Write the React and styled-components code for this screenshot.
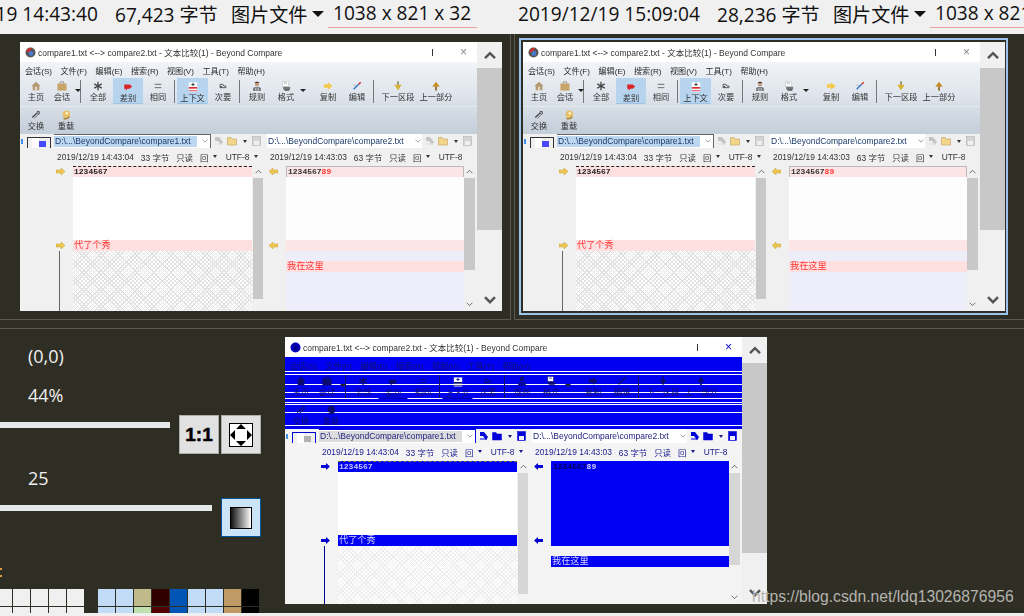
import React from "react"
import styled, { createGlobalStyle, ThemeProvider, useTheme } from "styled-components"

const FONT = '"Liberation Sans", "Noto Sans CJK SC", sans-serif'
const UI_FONT = '"Open Sans", "Noto Sans CJK SC", sans-serif'

const stripes = (blue, lines) => {
    const stops = []
    let y = 0
    lines.forEach((l) => {
        stops.push(`${blue} ${y}px ${l}px`, `#fff ${l}px ${l + 1.5}px`)
        y = l + 1.5
    })
    stops.push(`${blue} ${y}px 100%`)
    return `linear-gradient(to bottom, ${stops.join(",")})`
}

const normal = {
    mono: null,
    pathMono: null,
    toolbar: "linear-gradient(to bottom, #f1f4f8 0%, #dfe5ec 45%, #c4ced9 100%)",
    rowLine: "#e6eaef",
    text: "#2a2a2a",
    toolText: "#333333",
    activeBg: "#b7d4ee",
    activeBorder: "#9fc4e6",
    sep: "#777777",
    titleText: "#333333",
    closeColor: "#888888",
    pathBg: "#f0f0f0",
    comboSel: "#bdd7f0",
    comboEdge: "#666666",
    comboText: "#1a3a6a",
    infoText: "#333333",
    pink: "#ffe0e0",
    pinkR: "#fde5e5",
    plain: "#ffffff",
    faint: "#fdfdfd",
    lav: "#eeeefa",
    lineText: "#222222",
    lineTextR: "#333333",
    diffText: "#ff3333",
    hatch: "#e2e2e2",
    gutter: "#f0f0f0",
    thumb: "#c8c8c8",
    arrow: "#f0c850",
    vline: "#666666",
    pinkBorder: "#bbbbbb",
    dash: "#222222",
    mini: "#4848ff",
    miniLine: "#333333",
}

const blue = {
    ...normal,
    mono: "#0c0c70",
    pathMono: "#0000d8",
    toolbar: stripes("#0000f0", [14, 17, 27, 35, 41, 45, 47, 55, 68]),
    rowLine: "transparent",
    text: "#10106c",
    toolText: "#10106c",
    activeBg: "transparent",
    activeBorder: "#0000a8",
    sep: "#101070",
    closeColor: "#0000d0",
    pathBg: "#f4f4f4",
    comboSel: "#dcdcdc",
    comboEdge: "#0000e0",
    comboText: "#202080",
    infoText: "#18188c",
    pink: "#0000f5",
    pinkR: "#0000f5",
    faint: "#0000f5",
    lav: "#f3f3f3",
    lineText: "#c8c8ff",
    lineTextR: "#00005c",
    diffText: "#d8d8ff",
    hatch: "#eeeeee",
    gutter: "#f3f3f3",
    thumb: "#d6d6d6",
    arrow: "#0000d0",
    vline: "#000090",
    pinkBorder: "#0000f5",
    dash: "#777744",
    mini: "#b0b0b0",
    miniLine: "#0000d0",
}

const GlobalStyle = createGlobalStyle`
    html, body {
        margin: 0;
        padding: 0;
        background: #2f2e24;
        overflow: hidden;
    }
`

const Page = styled.div`
    position: relative;
    width: 1024px;
    height: 616px;
    overflow: hidden;
    background: #2f2e24;
    display: flex;
    flex-direction: column;
`

const Header = styled.div`
    display: flex;
    height: 34px;
    flex-shrink: 0;
    background: #f0f0f0;
    font-family: ${UI_FONT};
    font-size: 19.1px;
    color: #111111;
    white-space: nowrap;
`

const HeaderCell = styled.div`
    width: ${(props) => (props.$right ? "510px" : "514px")};
    height: 28px;
    display: flex;
    align-items: center;
    justify-content: ${(props) => (props.$right ? "flex-start" : "flex-end")};
    padding: ${(props) => (props.$right ? "0 0 0 4px" : "0 37px 0 0")};
    box-sizing: border-box;
    overflow: hidden;
`

const HeaderDate = styled.span`
    flex-shrink: 0;
    width: 182px;
    margin-right: 17px;
`

const HeaderSize = styled.span`
    flex-shrink: 0;
    width: 100px;
    margin-right: 16px;
`

const HeaderType = styled.span`
    flex-shrink: 0;
    width: 72px;
    margin-right: 9px;
`

const HeaderCaret = styled.span`
    flex-shrink: 0;
    width: 0;
    height: 0;
    margin-right: 4px;
    border-left: 6px solid transparent;
    border-right: 6px solid transparent;
    border-top: 6px solid #111111;
`

const Dims = styled.span`
    flex-shrink: 0;
    box-sizing: border-box;
    width: 149px;
    height: 28px;
    line-height: 27px;
    padding-left: 5px;
    border-bottom: 1px solid #e8a0a0;
`

const ThumbRow = styled.div`
    display: flex;
    height: 286px;
    flex-shrink: 0;
`

const ThumbCell = styled.div`
    box-sizing: border-box;
    height: 286px;
    border-bottom: 1px solid #5a5a52;
    ${(props) =>
        props.$right
            ? `
        width: 510px;
        margin-left: 3px;
        border-left: 1px solid #5a5a52;
        padding: 4px 0 0 4px;
    `
            : `
        width: 511px;
        border-right: 1px solid #5a5a52;
        padding: 8px 0 0 20px;
    `}
`

const SelectedFrame = styled.div`
    box-sizing: border-box;
    width: 489px;
    height: 277px;
    border: 2px solid #9cc4ec;
    padding: 2px 1px 2px 2px;
`

const Rule = styled.div`
    height: 1px;
    margin-top: 8px;
    flex-shrink: 0;
    background: #5a5a52;
`

const BottomRow = styled.div`
    display: flex;
    height: 284px;
    flex-shrink: 0;
`

const BottomStrip = styled.div`
    height: 3px;
    background: #f0f0f0;
`

const ViewPanel = styled.div`
    width: 285px;
    flex-shrink: 0;
    padding-top: 15px;
    box-sizing: border-box;
    display: flex;
    flex-direction: column;
    overflow: hidden;
    font-family: ${UI_FONT};
    font-size: 18px;
    color: #f0f0f0;
`

const Readout = styled.div`
    height: 24px;
    line-height: 24px;
    padding-left: 28px;
    margin-bottom: ${(props) => props.$after}px;
`

const ControlRow = styled.div`
    display: flex;
    align-items: flex-start;
    margin-bottom: ${(props) => props.$after}px;
`

const Slider = styled.div`
    width: ${(props) => props.$w}px;
    height: 6px;
    margin: 7px 9px 0 0;
    background: #e6e9ea;
`

const ViewButton = styled.div`
    box-sizing: border-box;
    width: 40px;
    height: 39px;
    margin-right: 2px;
    display: flex;
    align-items: center;
    justify-content: center;
    background: ${(props) => (props.$active ? "#cce4f7" : "#e1e1e1")};
    border: 1px solid ${(props) => (props.$active ? "#005499" : "#adadad")};
    font-family: "Liberation Sans", sans-serif;
    font-weight: 700;
    font-size: 19px;
    -webkit-text-stroke: 0.5px #000000;
    color: #000000;
`

const FitIcon = styled.div`
    box-sizing: border-box;
    width: 24px;
    height: 24px;
    border: 1px solid #000000;
    background: #ffffff;
`

const GradientIcon = styled.div`
    box-sizing: border-box;
    width: 22px;
    height: 22px;
    border: 1px solid #000000;
    background: linear-gradient(to right, #111111, #ffffff);
`

const OrangeMark = styled.div`
    width: 2px;
    height: 9px;
    margin-top: 31px;
    border-top: 2px solid #e0a040;
    border-bottom: 2px solid #e0a040;
    box-sizing: border-box;
`

const Palette = styled.div`
    display: flex;
    margin: 12px 0 0 -5px;
    height: 24px;
    overflow: hidden;
    gap: 14px;
`

const SwatchGrid = styled.div`
    display: grid;
    grid-template-columns: repeat(${(props) => props.$cols}, 17px);
    grid-auto-rows: 17px;
    gap: 1px;
`

const Swatch = styled.div`
    background: ${(props) => props.$c};
`

const BlueSlot = styled.div`
    padding-top: 8px;
`

const Shell = styled.div`
    display: flex;
    width: 482px;
    height: ${(props) => props.$h}px;
    overflow: hidden;
    font-family: ${FONT};
    flex-shrink: 0;
`

const Main = styled.div`
    width: 457px;
    flex-shrink: 0;
    display: flex;
    flex-direction: column;
    background: #ffffff;
    min-height: 0;
`

const OuterScroll = styled.div`
    width: 25px;
    flex-shrink: 0;
    display: flex;
    flex-direction: column;
    background: #f0f0f0;
`

const OuterEnd = styled.div`
    height: 26px;
    flex-shrink: 0;
    display: flex;
    align-items: center;
    justify-content: center;
    color: #555555;
`

const OuterThumb = styled.div`
    height: ${(props) => props.$h}px;
    flex-shrink: 0;
    background: #c8c8c8;
`

const OuterRest = styled.div`
    flex: 1;
    display: flex;
    align-items: flex-end;
    justify-content: center;
    padding-bottom: 7px;
    color: #555555;
`

const TitleBar = styled.div`
    height: 20px;
    flex-shrink: 0;
    display: flex;
    align-items: center;
    padding-left: 5px;
    font-size: 8.5px;
    white-space: nowrap;
    color: ${(props) => props.theme.titleText};
    filter: blur(0.3px);
`

const TitleText = styled.span`
    margin-left: 2px;
    flex: 1;
`

const WinMinimize = styled.span`
    width: 1px;
    height: 7px;
    margin-right: 27px;
    background: #333333;
`

const WinClose = styled.span`
    margin-right: 10px;
    font-size: 12px;
    line-height: 12px;
    color: ${(props) => props.theme.closeColor};
`

const ToolArea = styled.div`
    height: 72px;
    flex-shrink: 0;
    background: ${(props) => props.theme.toolbar};
    display: flex;
    flex-direction: column;
    filter: blur(0.35px);
`

const MenuRow = styled.div`
    height: 16px;
    display: flex;
    align-items: center;
    gap: 8.5px;
    padding-left: 5px;
    font-size: 8.1px;
    white-space: nowrap;
    color: ${(props) => props.theme.text};
`

const ToolRow = styled.div`
    height: 27px;
    display: flex;
    padding-left: 3px;
    ${(props) => props.$second && `
        margin-top: 1px;
        border-top: 1px solid ${props.theme.rowLine};
    `}
`

const ToolButton = styled.div`
    box-sizing: border-box;
    width: ${(props) => props.$w}px;
    height: 26px;
    display: flex;
    flex-direction: column;
    align-items: center;
    justify-content: flex-start;
    padding-top: 3px;
    font-size: 8.2px;
    line-height: 11px;
    white-space: nowrap;
    color: ${(props) => props.theme.toolText};
    background: ${(props) => (props.$active ? props.theme.activeBg : "transparent")};
    ${(props) => props.$active && `
        border: 1px solid ${props.theme.activeBorder};
        border-top-color: transparent;
        border-left-color: transparent;
        border-right-color: transparent;
    `}
`

const Glyph = styled.svg`
    width: 10px;
    height: 10px;
    flex-shrink: 0;
    margin-bottom: 1px;
`

const ToolCaret = styled.span`
    box-sizing: border-box;
    width: ${(props) => props.$w}px;
    margin-right: ${(props) => props.$r || 0}px;
    height: 13px;
    margin-top: 7px;
    flex-shrink: 0;
    position: relative;
    &::after {
        content: "";
        position: absolute;
        left: 0;
        top: 4px;
        border-left: 3px solid transparent;
        border-right: 3px solid transparent;
        border-top: 3px solid #222222;
    }
`

const ToolSep = styled.span`
    width: 1px;
    height: 23px;
    margin: 2px ${(props) => props.$r}px 0 ${(props) => props.$l}px;
    flex-shrink: 0;
    background: ${(props) => props.theme.sep};
`

const PathRow = styled.div`
    height: 14px;
    flex-shrink: 0;
    display: flex;
    align-items: center;
    background: ${(props) => props.theme.pathBg};
    font-size: 8.5px;
    white-space: nowrap;
    color: ${(props) => props.theme.comboText};
`

const PathTick = styled.span`
    width: 2px;
    height: 5px;
    margin: 0 4px 0 1px;
    background: #3f8ff0;
`

const MiniMap = styled.div`
    position: relative;
    box-sizing: border-box;
    width: 24px;
    height: 14px;
    margin: 6px 3px 0 0;
    flex-shrink: 0;
    border-top: 1px solid ${(props) => props.theme.miniLine};
    border-left: 1px solid ${(props) => props.theme.miniLine};
    border-right: 1px solid ${(props) => props.theme.miniLine};
    background: linear-gradient(to right, #f0f0f0 0 4px, #fff 4px 11px, #f0f0f0 11px);
    &::after {
        content: "";
        position: absolute;
        left: 11px;
        top: 3px;
        width: 7px;
        height: 6px;
        background: ${(props) => props.theme.mini};
    }
`

const Combo = styled.div`
    box-sizing: border-box;
    width: ${(props) => props.$w}px;
    height: 14px;
    flex-shrink: 0;
    display: flex;
    align-items: center;
    background: #ffffff;
    ${(props) => props.$focus && `
        border-top: 1px solid ${props.theme.comboEdge};
        border-right: 1px solid ${props.theme.comboEdge};
    `}
`

const ComboText = styled.span`
    box-sizing: border-box;
    width: ${(props) => props.$w}px;
    height: 11px;
    line-height: 11px;
    padding-left: 1px;
    background: ${(props) => (props.$focus ? props.theme.comboSel : "transparent")};
    overflow: hidden;
    filter: blur(0.3px);
`

const ComboChevron = styled.span`
    margin-left: 5px;
    display: flex;
    color: #777777;
`

const PathTools = styled.div`
    width: ${(props) => props.$w}px;
    flex-shrink: 0;
    display: flex;
    align-items: center;
    gap: 3px;
    padding-left: 3px;
    box-sizing: border-box;
`

const SmallCaret = styled.span`
    width: 0;
    height: 0;
    margin: 0 2px;
    border-left: 2.5px solid transparent;
    border-right: 2.5px solid transparent;
    border-top: 3px solid ${(props) => props.theme.infoText};
`

const InfoRow = styled.div`
    height: 17px;
    flex-shrink: 0;
    display: flex;
    align-items: center;
    padding-left: 37px;
    background: ${(props) => props.theme.pathBg};
    font-size: 8.4px;
    white-space: nowrap;
    overflow: hidden;
    color: ${(props) => props.theme.infoText};
    filter: blur(0.3px);
`

const InfoGroup = styled.div`
    width: 213px;
    flex-shrink: 0;
    display: flex;
    align-items: center;
    gap: 7px;
`

const InfoCaret = styled.span`
    display: inline-flex;
    align-items: center;
`

const Panes = styled.div`
    flex: 1;
    min-height: 0;
    display: flex;
    background: ${(props) => props.theme.gutter};
    overflow: hidden;
`

const Gutter = styled.div`
    width: ${(props) => props.$w}px;
    flex-shrink: 0;
    display: flex;
    flex-direction: column;
    padding: 1px 0 0 ${(props) => props.$pad}px;
    box-sizing: border-box;
`

const GutterMark = styled.div`
    height: ${(props) => props.$h}px;
    flex-shrink: 0;
    display: flex;
    align-items: center;
`

const GutterLine = styled.div`
    flex: 1;
    width: 1px;
    margin-left: 3px;
    background: ${(props) => props.theme.vline};
`

const DiffPane = styled.div`
    width: ${(props) => props.$w}px;
    flex-shrink: 0;
    display: flex;
    flex-direction: column;
    padding-top: 1px;
    box-sizing: border-box;
`

const lineBg = (props) => {
    const t = props.theme
    if (props.$kind === "pink") return t.pink
    if (props.$kind === "pinkR") return t.pinkR
    if (props.$kind === "faint") return t.faint
    if (props.$kind === "lav") return t.lav
    return t.plain
}

const DiffLine = styled.div`
    box-sizing: border-box;
    height: ${(props) => props.$h}px;
    flex-shrink: 0;
    padding-left: 1px;
    background: ${lineBg};
    color: ${(props) => props.theme.diffText};
    font-size: 9.2px;
    line-height: 11px;
    white-space: nowrap;
    filter: blur(0.2px);
    ${(props) => props.$dashed && `border-top: 1px dashed ${props.theme.dash}; line-height: 9px;`}
    ${(props) => props.$boxed && `
        border-top: 1px solid ${props.theme.pinkBorder};
        border-left: 1px solid ${props.theme.pinkBorder};
        border-right: 1px solid ${props.theme.pinkBorder};
        line-height: 9px;
    `}
    ${(props) => props.$fill && "flex: 1;"}
`

const CodeText = styled.span`
    font-family: "Liberation Mono", monospace;
    font-size: 8px;
    font-weight: 700;
    color: ${(props) => (props.$right ? props.theme.lineTextR : props.theme.lineText)};
`

const CodeDiff = styled.span`
    font-family: "Liberation Mono", monospace;
    font-size: 8px;
    font-weight: 700;
`

const HatchFill = styled.div`
    flex: 1;
    background-color: #ffffff;
    background-image:
        repeating-linear-gradient(45deg, ${(props) => props.theme.hatch} 0 1px, transparent 1px 3px),
        repeating-linear-gradient(-45deg, ${(props) => props.theme.hatch} 0 1px, transparent 1px 3px);
`

const InnerScroll = styled.div`
    width: ${(props) => props.$w}px;
    margin: ${(props) => props.$m};
    flex-shrink: 0;
    display: flex;
    flex-direction: column;
`

const InnerEnd = styled.div`
    height: 13px;
    flex-shrink: 0;
    display: flex;
    align-items: center;
    justify-content: center;
    color: #555555;
`

const InnerThumb = styled.div`
    height: ${(props) => props.$h}px;
    flex-shrink: 0;
    background: ${(props) => props.theme.thumb};
`

const InnerRest = styled.div`
    flex: 1;
    display: flex;
    align-items: flex-end;
    justify-content: center;
    padding-bottom: 4px;
    color: #555555;
`

const Watermark = styled.div`
    position: absolute;
    left: 752px;
    top: 588px;
    font-family: "Liberation Sans", sans-serif;
    font-size: 15.7px;
    line-height: 18px;
    color: #b4b4b0;
    white-space: nowrap;
`

const Chevron = ({ up, size = 12, weight = 2.4 }) => (
    <svg width={size} height={size * 0.7} viewBox='0 0 12 8'>
        <path
            d={up ? "M1 7 L6 2 L11 7" : "M1 1 L6 6 L11 1"}
            fill='none'
            stroke='currentColor'
            strokeWidth={weight}
        />
    </svg>
)

const RowArrow = ({ left }) => {
    const theme = useTheme()
    return (
        <svg width='9' height='7' viewBox='0 0 9 7'>
            <path
                d={left ? "M0 3.5 L4 0 V2 H9 V5 H4 V7 Z" : "M9 3.5 L5 0 V2 H0 V5 H5 V7 Z"}
                fill={theme.arrow}
                stroke={theme.mono ? "none" : "#b89020"}
                strokeWidth='0.4'
            />
        </svg>
    )
}

const ToolIcon = ({ name }) => {
    const theme = useTheme()
    const c = (color) => theme.mono || color
    const shapes = {
        home: (
            <>
                <path d='M6 1 L11.5 6 H10 V11 H2 V6 H.5 Z' fill={c("#b59a72")} />
                <rect x='5' y='7' width='2' height='4' fill={c("#f0e8d8")} />
            </>
        ),
        session: (
            <>
                <rect x='.5' y='3' width='11' height='8.5' fill={c("#c9a468")} />
                <path d='M4 3 V1 H8 V3' fill='none' stroke={c("#888")} />
            </>
        ),
        all: <path d='M6 1 V11 M1.5 3.5 L10.5 8.5 M10.5 3.5 L1.5 8.5' stroke={c("#444")} strokeWidth='1.6' />,
        diff: <path d='M1.5 3 H8 L11 5.5 L8 8 H5 L3.5 10.5 L3 8 H1.5 Z' fill={c("#d92424")} />,
        same: <path d='M2 4 H10 M2 8 H10' stroke={c("#555")} strokeWidth='1' />,
        context: (
            <>
                <rect x='1' y='.5' width='10' height='11' fill='#fff' />
                <path d='M6 1 V5 M4 3 H8' stroke={c("#222")} strokeWidth='1' />
                <rect x='1' y='6' width='10' height='2' fill={c("#d93030")} />
                <rect x='1' y='10' width='10' height='1' fill={c("#d93030")} />
            </>
        ),
        minor: (
            <>
                <path d='M2.5 4 H6 L7 6 H9.5 V8 H2.5 Z' fill='none' stroke={c("#444")} strokeWidth='1' />
                <rect x='3' y='6' width='2' height='2' fill={c("#444")} />
            </>
        ),
        rules: (
            <>
                <circle cx='6' cy='3.5' r='2.6' fill={c("#c49a76")} />
                <path d='M3 2.5 Q6 -1 9 2.5 Z' fill={c("#333")} />
                <path d='M1.5 12 V8.5 Q6 5 10.5 8.5 V12 Z' fill={c("#666")} />
                <path d='M4 8 V12 M6 7.5 V12 M8 8 V12' stroke={theme.mono ? "#0000f0" : "#eee"} strokeWidth='.8' />
            </>
        ),
        format: (
            <>
                <rect x='2' y='.5' width='7' height='6' fill='#fff' stroke={c("#bbb")} strokeWidth='.6' />
                <path d='M3.5 2.5 H7' stroke={c("#666")} strokeWidth='.8' />
                <rect x='2.5' y='7' width='8.5' height='3' fill={c("#777")} />
                <rect x='4' y='10' width='6' height='1.5' fill={c("#333")} />
            </>
        ),
        copy: <path d='M1 4 H6 V1.5 L11.5 6 L6 10.5 V8 H1 Z' fill={c("#f2c94c")} />,
        edit: (
            <>
                <path d='M2 10 L8 4' stroke={c("#3a78c8")} strokeWidth='1.8' />
                <path d='M8 4 L10.5 1.5' stroke={c("#d83030")} strokeWidth='1.8' />
                <path d='M1 5 H5' stroke={c("#aaa")} strokeWidth='.8' />
            </>
        ),
        down: (
            <>
                <rect x='5' y='.5' width='2' height='4' fill={c("#808060")} />
                <path d='M1.5 4.5 H10.5 L6 11 Z' fill={c("#d8b030")} />
            </>
        ),
        up: (
            <>
                <path d='M6 1 L10.5 7 H1.5 Z' fill={c("#c88a20")} />
                <rect x='5' y='7' width='2' height='4.5' fill={c("#886030")} />
            </>
        ),
        swap: (
            <>
                <path d='M1.5 9 L8 3' stroke={c("#444")} strokeWidth='1.6' />
                <path d='M4 10 L10.5 4' stroke={c("#777")} strokeWidth='1.2' />
                <path d='M7 1.5 L10 2 L9.5 5' fill='none' stroke={c("#333")} strokeWidth='1' />
            </>
        ),
        reload: (
            <>
                <circle cx='6.5' cy='5' r='4.5' fill={c("#e6c068")} />
                <circle cx='7' cy='4' r='1.6' fill={c("#fff0c0")} />
                <path d='M3 10 Q7 12 10 8' fill='none' stroke={c("#a08030")} strokeWidth='1.6' />
            </>
        ),
    }
    return <Glyph viewBox='0 0 12 12'>{shapes[name]}</Glyph>
}

const PathIcon = ({ name }) => {
    const theme = useTheme()
    const c = (color) => theme.pathMono || color
    if (name === "swap")
        return (
            <svg width='10' height='10' viewBox='0 0 10 10'>
                <path d='M1 1 H5 L9 6 L7 9 L4 5 H1 Z' fill={c("#c4c4c4")} />
                <path d='M1 8 H8' stroke={c("#ddd")} />
            </svg>
        )
    if (name === "folder")
        return (
            <svg width='11' height='10' viewBox='0 0 11 10'>
                <path d='M.5 1.5 H4 L5 3 H9.5 V9 H.5 Z' fill={c("#f3d68a")} stroke={c("#b09050")} strokeWidth='.5' />
            </svg>
        )
    return (
        <svg width='9' height='10' viewBox='0 0 9 10'>
            <rect x='.5' y='.5' width='8' height='9' fill={c("#d4d4d4")} stroke={c("#aaa")} strokeWidth='.5' />
            <rect x='2' y='5' width='5' height='4' fill='#f0f0f0' />
        </svg>
    )
}

const MENU = ["会话(S)", "文件(F)", "编辑(E)", "搜索(R)", "视图(V)", "工具(T)", "帮助(H)"]

const InfoBlock = ({ date, size, caret }) => (
    <InfoGroup>
        <span>{date}</span>
        <span>{size}</span>
        <span>只读</span>
        <InfoCaret>
            回&nbsp;
            <SmallCaret />
        </InfoCaret>
        <InfoCaret>
            UTF-8&nbsp;
            {caret && <SmallCaret />}
        </InfoCaret>
    </InfoGroup>
)

const CompareWindow = ({ palette, height, outerThumb }) => (
    <ThemeProvider theme={palette}>
        <Shell $h={height}>
            <Main>
                <TitleBar>
                    <svg width='11' height='11' viewBox='0 0 11 11'>
                        <circle cx='5.5' cy='5.5' r='5' fill={palette.mono ? "#0000c0" : "#555555"} />
                        <path d='M1 5 A5 5 0 0 1 7 1 L5 5 Z' fill={palette.mono ? "#0000a0" : "#c83030"} />
                        <circle cx='6' cy='6.5' r='2.4' fill={palette.mono ? "#000090" : "#4a7ad0"} />
                    </svg>
                    <TitleText>compare1.txt &lt;--&gt; compare2.txt - 文本比较(1) - Beyond Compare</TitleText>
                    <WinMinimize />
                    <WinClose>×</WinClose>
                </TitleBar>
                <ToolArea>
                    <MenuRow>
                        {MENU.map((item) => (
                            <span key={item}>{item}</span>
                        ))}
                    </MenuRow>
                    <ToolRow>
                        <ToolButton $w={26}><ToolIcon name='home' />主页</ToolButton>
                        <ToolButton $w={26}><ToolIcon name='session' />会话</ToolButton>
                        <ToolCaret $w={5} />
                        <ToolSep $l={0} $r={2} />
                        <ToolButton $w={30}><ToolIcon name='all' />全部</ToolButton>
                        <ToolButton $w={30} $active><ToolIcon name='diff' />差别</ToolButton>
                        <ToolButton $w={30}><ToolIcon name='same' />相同</ToolButton>
                        <ToolSep $l={1} $r={2} />
                        <ToolButton $w={31} $active><ToolIcon name='context' />上下文</ToolButton>
                        <ToolButton $w={30}><ToolIcon name='minor' />次要</ToolButton>
                        <ToolSep $l={1} $r={2} />
                        <ToolButton $w={30}><ToolIcon name='rules' />规则</ToolButton>
                        <ToolButton $w={28}><ToolIcon name='format' />格式</ToolButton>
                        <ToolCaret $w={8} $r={5} />
                        <ToolButton $w={30}><ToolIcon name='copy' />复制</ToolButton>
                        <ToolButton $w={28}><ToolIcon name='edit' />编辑</ToolButton>
                        <ToolSep $l={2} $r={4} />
                        <ToolButton $w={40}><ToolIcon name='down' />下一区段</ToolButton>
                        <ToolButton $w={36}><ToolIcon name='up' />上一部分</ToolButton>
                    </ToolRow>
                    <ToolRow $second>
                        <ToolButton $w={26}><ToolIcon name='swap' />交换</ToolButton>
                        <ToolButton $w={34}><ToolIcon name='reload' />重载</ToolButton>
                    </ToolRow>
                </ToolArea>
                <PathRow>
                    <PathTick />
                    <MiniMap />
                    <Combo $w={157} $focus>
                        <ComboText $w={143} $focus>D:\...\BeyondCompare\compare1.txt</ComboText>
                        <ComboChevron><Chevron size={6} weight={1.4} /></ComboChevron>
                    </Combo>
                    <PathTools $w={56}>
                        <PathIcon name='swap' />
                        <PathIcon name='folder' />
                        <SmallCaret />
                        <PathIcon name='save' />
                    </PathTools>
                    <Combo $w={155}>
                        <ComboText $w={143}>D:\...\BeyondCompare\compare2.txt</ComboText>
                        <ComboChevron><Chevron size={6} weight={1.4} /></ComboChevron>
                    </Combo>
                    <PathTools $w={50}>
                        <PathIcon name='swap' />
                        <PathIcon name='folder' />
                        <SmallCaret />
                        <PathIcon name='save' />
                    </PathTools>
                </PathRow>
                <InfoRow>
                    <InfoBlock date='2019/12/19 14:43:04' size='33 字节' caret />
                    <InfoBlock date='2019/12/19 14:43:03' size='63 字节' />
                </InfoRow>
                <Panes>
                    <Gutter $w={53} $pad={36}>
                        <GutterMark $h={11}><RowArrow /></GutterMark>
                        <GutterMark $h={63} />
                        <GutterMark $h={11}><RowArrow /></GutterMark>
                        <GutterLine />
                    </Gutter>
                    <DiffPane $w={179}>
                        <DiffLine $kind='pink' $h={11} $dashed>
                            <CodeText>1234567</CodeText>
                        </DiffLine>
                        <DiffLine $kind='plain' $h={63} />
                        <DiffLine $kind='pink' $h={11}>代了个秀</DiffLine>
                        <HatchFill />
                    </DiffPane>
                    <InnerScroll $w={10} $m='0 0 0 1px'>
                        <InnerEnd><Chevron size={7} weight={1.4} up /></InnerEnd>
                        <InnerThumb $h={121} />
                    </InnerScroll>
                    <Gutter $w={23} $pad={6}>
                        <GutterMark $h={11}><RowArrow left /></GutterMark>
                        <GutterMark $h={63} />
                        <GutterMark $h={11}><RowArrow left /></GutterMark>
                    </Gutter>
                    <DiffPane $w={178}>
                        <DiffLine $kind='pinkR' $h={11} $boxed>
                            <CodeText $right>1234567</CodeText>
                            <CodeDiff>89</CodeDiff>
                        </DiffLine>
                        <DiffLine $kind='faint' $h={63} />
                        <DiffLine $kind='pinkR' $h={11} />
                        <DiffLine $kind='lav' $h={10} />
                        <DiffLine $kind='pink' $h={11}>我在这里</DiffLine>
                        <DiffLine $kind='lav' $fill />
                    </DiffPane>
                    <InnerScroll $w={11} $m='0 2px 0 0'>
                        <InnerEnd><Chevron size={7} weight={1.4} up /></InnerEnd>
                        <InnerThumb $h={92} />
                        <InnerRest><Chevron size={7} weight={1.4} /></InnerRest>
                    </InnerScroll>
                </Panes>
            </Main>
            <OuterScroll>
                <OuterEnd><Chevron up /></OuterEnd>
                <OuterThumb $h={outerThumb} />
                <OuterRest><Chevron /></OuterRest>
            </OuterScroll>
        </Shell>
    </ThemeProvider>
)

const FileStats = ({ date, size, right }) => (
    <HeaderCell $right={right}>
        <HeaderDate>{date}</HeaderDate>
        <HeaderSize>{size}</HeaderSize>
        <HeaderType>图片文件</HeaderType>
        <HeaderCaret />
        <Dims>1038 x 821 x 32</Dims>
    </HeaderCell>
)

const LIGHT = "#f0f0f0"
const SKY = "#c2dcf7"
const PALETTE_LEFT = Array(10).fill(LIGHT)
const PALETTE_RIGHT = [
    SKY, SKY, "#c0b98a", "#300000", "#0055b5", SKY, SKY, "#c09a65", "#000000",
    SKY, SKY, "#c0dfae", "#500000", "#0055b5", SKY, SKY, "#c09a65", "#000000",
]

const App = () => {
    return (
        <Page>
            <GlobalStyle />
            <Header>
                <FileStats date='2019/12/19 14:43:40' size='67,423 字节' />
                <FileStats date='2019/12/19 15:09:04' size='28,236 字节' right />
            </Header>
            <ThumbRow>
                <ThumbCell>
                    <CompareWindow palette={normal} height={269} outerThumb={162} />
                </ThumbCell>
                <ThumbCell $right>
                    <SelectedFrame>
                        <CompareWindow palette={normal} height={269} outerThumb={162} />
                    </SelectedFrame>
                </ThumbCell>
            </ThumbRow>
            <Rule />
            <BottomRow>
                <ViewPanel>
                    <Readout $after={15}>(0,0)</Readout>
                    <Readout $after={8}>44%</Readout>
                    <ControlRow $after={12}>
                        <Slider $w={170} />
                        <ViewButton>1:1</ViewButton>
                        <ViewButton>
                            <FitIcon>
                                <svg width='22' height='22' viewBox='0 0 22 22'>
                                    <path
                                        d='M11 0 L16 5 H6 Z M11 22 L6 17 H16 Z M0 11 L5 6 V16 Z M22 11 L17 16 V6 Z'
                                        fill='#000'
                                    />
                                </svg>
                            </FitIcon>
                        </ViewButton>
                    </ControlRow>
                    <Readout $after={8}>25</Readout>
                    <ControlRow $after={0}>
                        <Slider $w={212} />
                        <ViewButton $active>
                            <GradientIcon />
                        </ViewButton>
                    </ControlRow>
                    <OrangeMark />
                    <Palette>
                        <SwatchGrid $cols={5}>
                            {PALETTE_LEFT.map((c, i) => (
                                <Swatch key={i} $c={c} />
                            ))}
                        </SwatchGrid>
                        <SwatchGrid $cols={9}>
                            {PALETTE_RIGHT.map((c, i) => (
                                <Swatch key={i} $c={c} />
                            ))}
                        </SwatchGrid>
                    </Palette>
                </ViewPanel>
                <BlueSlot>
                    <CompareWindow palette={blue} height={267} outerThumb={190} />
                </BlueSlot>
            </BottomRow>
            <BottomStrip />
            <Watermark>https://blog.csdn.net/ldq13026876956</Watermark>
        </Page>
    )
}

export default App
